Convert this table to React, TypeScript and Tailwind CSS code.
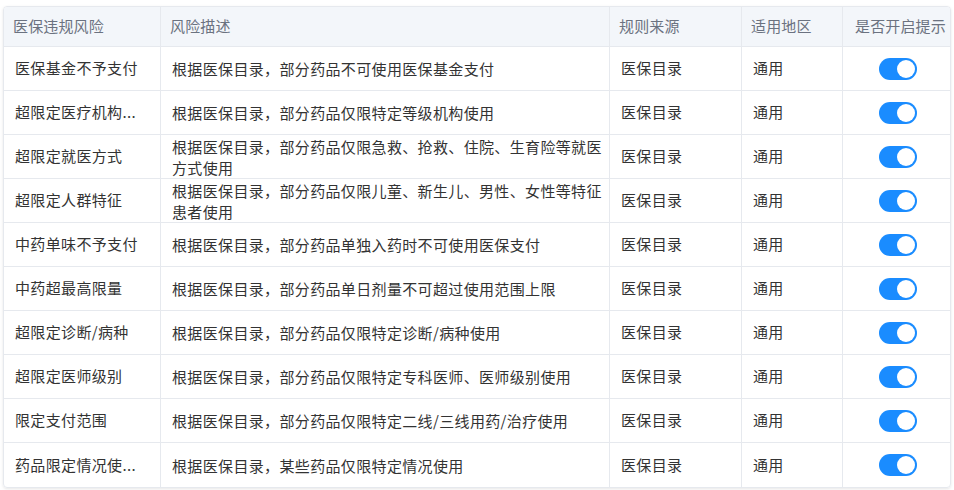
import React from "react";

const rows: [string, string, string][] = [
  ["医保基金不予支付", "根据医保目录，部分药品不可使用医保基金支付", ""],
  ["超限定医疗机构...", "根据医保目录，部分药品仅限特定等级机构使用", ""],
  ["超限定就医方式", "根据医保目录，部分药品仅限急救、抢救、住院、生育险等就医方式使用", ""],
  ["超限定人群特征", "根据医保目录，部分药品仅限儿童、新生儿、男性、女性等特征患者使用", ""],
  ["中药单味不予支付", "根据医保目录，部分药品单独入药时不可使用医保支付", ""],
  ["中药超最高限量", "根据医保目录，部分药品单日剂量不可超过使用范围上限", ""],
  ["超限定诊断/病种", "根据医保目录，部分药品仅限特定诊断/病种使用", ""],
  ["超限定医师级别", "根据医保目录，部分药品仅限特定专科医师、医师级别使用", ""],
  ["限定支付范围", "根据医保目录，部分药品仅限特定二线/三线用药/治疗使用", ""],
  ["药品限定情况使...", "根据医保目录，某些药品仅限特定情况使用", ""],
];

function Toggle() {
  return (
    <div className="w-[38px] h-[22px] rounded-full bg-[#1a8cff] flex items-center justify-end pr-[2px]">
      <div className="w-[18px] h-[18px] rounded-full bg-white" />
    </div>
  );
}

export default function App() {
  const headers = ["医保违规风险", "风险描述", "规则来源", "适用地区", "是否开启提示"];
  return (
    <div
      className="w-[954px] h-[490px] bg-white pt-[6px] pl-[3px]"
      style={{ fontFamily: '"Noto Sans CJK SC", "Noto Sans", sans-serif' }}
    >
      <div className="w-[948px] rounded-[4px] border border-[#e6e9ee] shadow-[0_1px_3px_rgba(0,0,0,0.10)] overflow-hidden">
        <div className="grid grid-cols-[157px_449px_132px_101px_1fr] text-[15px]">
          {headers.map((h, i) => (
            <div
              key={h}
              className={
                "h-[40px] flex items-center bg-[#f3f6fa] text-[#6b7280] border-b border-[#e6e9ee] whitespace-nowrap tracking-[0.15px] " +
                (i < 4 ? "border-r pl-[9px]" : "pl-[12px]")
              }
            >
              {h}
            </div>
          ))}
          {rows.map((r, ri) => {
            const last = ri === rows.length - 1;
            const bb = last ? "" : "border-b ";
            return (
              <React.Fragment key={ri}>
                <div className={bb + "h-[44px] flex items-center border-r border-[#e6e9ee] pl-[11px] text-[#333333] whitespace-nowrap tracking-[0.35px]"}>
                  {r[0]}
                </div>
                <div className={bb + "h-[44px] flex items-center border-r border-[#e6e9ee] pl-[11px] pr-[3px] text-[#333333] leading-[21px] tracking-[0.35px]"}>
                  {r[1]}
                </div>
                <div className={bb + "h-[44px] flex items-center border-r border-[#e6e9ee] pl-[11px] text-[#333333] tracking-[0.35px]"}>
                  医保目录
                </div>
                <div className={bb + "h-[44px] flex items-center border-r border-[#e6e9ee] pl-[11px] text-[#333333] tracking-[0.35px]"}>
                  通用
                </div>
                <div className={bb + "h-[44px] flex items-center justify-center border-[#e6e9ee] pl-[2px]"}>
                  <Toggle />
                </div>
              </React.Fragment>
            );
          })}
        </div>
      </div>
    </div>
  );
}
